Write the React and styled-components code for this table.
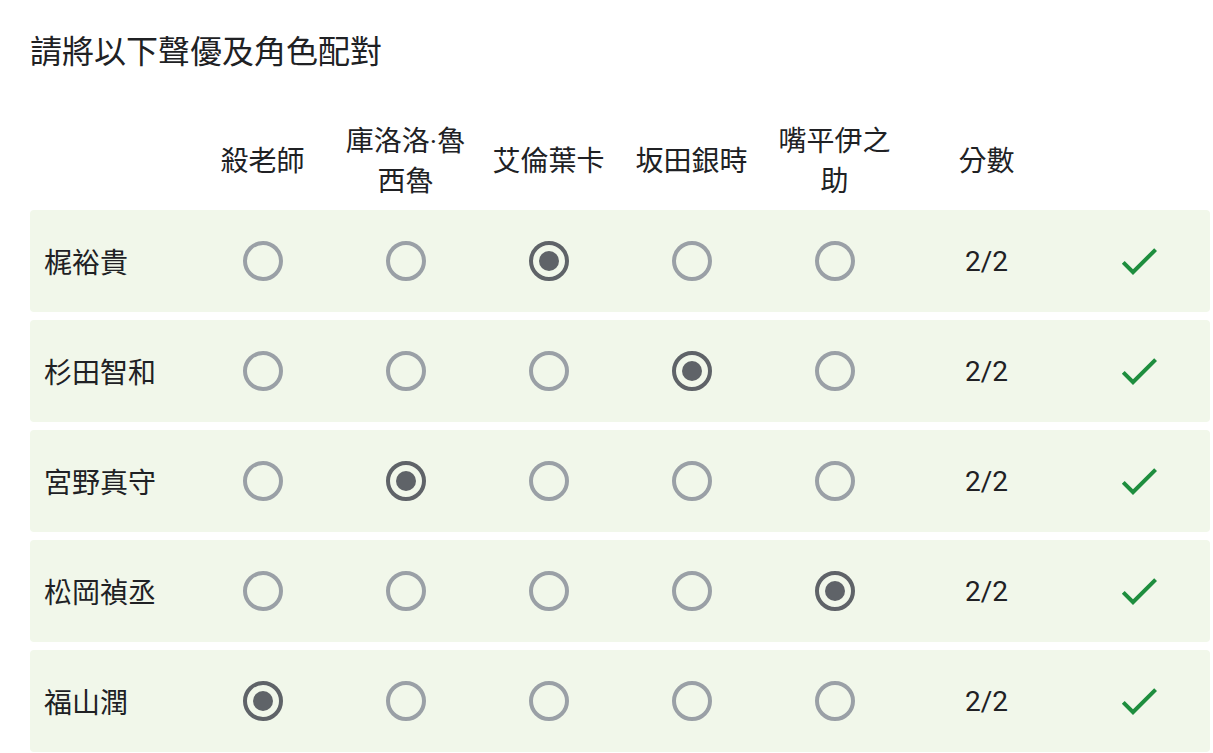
import styled, { createGlobalStyle } from "styled-components";

const GlobalStyle = createGlobalStyle`
  body {
    margin: 0;
    background: #ffffff;
    font-family: Roboto, "Noto Sans CJK TC", sans-serif;
    color: #202124;
  }
`;

const cols = "161px repeat(5, 143px) 161px 143px";

const Page = styled.div`
  padding: 28px 0 0 30px;
  width: 1180px;
`;

const Title = styled.div`
  font-size: 32px;
  line-height: 48px;
  margin-bottom: 34px;
`;

const HeaderRow = styled.div`
  display: grid;
  grid-template-columns: ${cols};
  height: 100px;
  align-items: center;
`;

const HeaderCell = styled.div`
  font-size: 28px;
  line-height: 40px;
  text-align: center;
  padding: 4px 8px 0;
`;

const Rows = styled.div`
  display: flex;
  flex-direction: column;
  gap: 8px;
`;

const Row = styled.div`
  display: grid;
  grid-template-columns: ${cols};
  height: 102px;
  align-items: center;
  background: #f1f7ea;
  border-radius: 4px;
`;

const Label = styled.div`
  font-size: 28px;
  line-height: 40px;
  padding: 6px 0 0 14px;
`;

const Cell = styled.div`
  display: flex;
  justify-content: center;
  align-items: center;
`;

const Radio = styled.div`
  box-sizing: border-box;
  width: 40px;
  height: 40px;
  border-radius: 50%;
  border: 4px solid ${(p) => (p.$checked ? "#5f6368" : "#9aa0a6")};
  display: flex;
  align-items: center;
  justify-content: center;
  &::after {
    content: "";
    width: 20px;
    height: 20px;
    border-radius: 50%;
    background: #5f6368;
    display: ${(p) => (p.$checked ? "block" : "none")};
  }
`;

const Score = styled.div`
  font-size: 28px;
  line-height: 40px;
  text-align: center;
  padding-top: 2px;
`;

const characters = ["殺老師", "庫洛洛·魯西魯", "艾倫葉卡", "坂田銀時", "嘴平伊之助"];

const answers = [
  { name: "梶裕貴", pick: 2 },
  { name: "杉田智和", pick: 3 },
  { name: "宮野真守", pick: 1 },
  { name: "松岡禎丞", pick: 4 },
  { name: "福山潤", pick: 0 },
];

function Check() {
  return (
    <svg width="48" height="48" viewBox="0 0 24 24">
      <path fill="#1e8e3e" d="M9 16.17L4.83 12l-1.42 1.41L9 19 21 7l-1.41-1.41z" />
    </svg>
  );
}

export default function App() {
  return (
    <>
      <GlobalStyle />
      <Page>
        <Title>請將以下聲優及角色配對</Title>
        <HeaderRow>
          <div />
          {characters.map((c) => (
            <HeaderCell key={c}>{c}</HeaderCell>
          ))}
          <HeaderCell>分數</HeaderCell>
          <div />
        </HeaderRow>
        <Rows>
          {answers.map((a) => (
            <Row key={a.name}>
              <Label>{a.name}</Label>
              {characters.map((c, i) => (
                <Cell key={c}>
                  <Radio $checked={i === a.pick} />
                </Cell>
              ))}
              <Score>2/2</Score>
              <Cell>
                <Check />
              </Cell>
            </Row>
          ))}
        </Rows>
      </Page>
    </>
  );
}
